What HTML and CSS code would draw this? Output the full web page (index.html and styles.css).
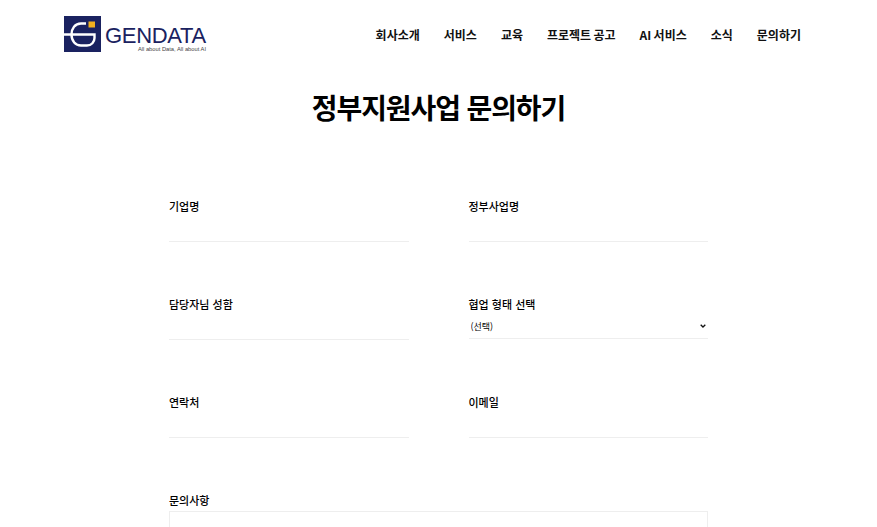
FILE: index.html
```html
<!DOCTYPE html>
<html lang="ko">
<head>
<meta charset="utf-8">
<title>정부지원사업 문의하기</title>
<link rel="stylesheet" href="styles.css">
</head>
<body>
<header class="header">
  <a class="logo" href="#">
    <svg class="logo-mark" width="37" height="36" viewBox="0 0 37 36" aria-hidden="true">
      <rect width="37" height="36" fill="#1a2260"/>
      <rect x="24.500" y="5.500" width="6.500" height="6" fill="#f2b01e"/>
      <path d="M22 7.500H17C11 7.500 7.500 12.500 7.500 18.500C7.500 25 11.500 29.500 17 29.500H23C27.500 29.500 30.500 26 30.500 22V18.500H0" fill="none" stroke="#fff" stroke-width="2.400"/>
    </svg>
    <span class="logo-text">
      <span class="logo-name">GENDATA</span>
      <span class="logo-tag">All about Data, All about AI</span>
    </span>
  </a>
  <nav class="nav">
    <a href="#">회사소개</a>
    <a href="#">서비스</a>
    <a href="#">교육</a>
    <a href="#">프로젝트 공고</a>
    <a href="#">AI 서비스</a>
    <a href="#">소식</a>
    <a href="#">문의하기</a>
  </nav>
</header>
<main class="main">
  <h1 class="title">정부지원사업 문의하기</h1>
  <form class="form">
    <label class="field"><span class="label">기업명</span><input class="input" type="text"></label>
    <label class="field"><span class="label">정부사업명</span><input class="input" type="text"></label>
    <label class="field"><span class="label">담당자님 성함</span><input class="input" type="text"></label>
    <label class="field"><span class="label">협업 형태 선택</span>
      <span class="select-wrap">
        <select class="select"><option>(선택)</option></select>
        <svg class="chevron" width="6" height="4" viewBox="0 0 6 4" aria-hidden="true"><path d="M.7.7 3 3 5.300.7" fill="none" stroke="#111" stroke-width="1.300"/></svg>
      </span>
    </label>
    <label class="field"><span class="label">연락처</span><input class="input" type="text"></label>
    <label class="field"><span class="label">이메일</span><input class="input" type="email"></label>
    <label class="field field-wide"><span class="label">문의사항</span><textarea class="textarea"></textarea></label>
  </form>
</main>
</body>
</html>
```
FILE: styles.css
```css
* { box-sizing: border-box; }
html, body { margin: 0; padding: 0; height: 527px; overflow: hidden; background: #fff; }
body { font-family: "Noto Sans CJK KR", "Noto Sans", sans-serif; color: #111; }
a { color: inherit; text-decoration: none; }

.header { display: flex; justify-content: space-between; align-items: center; height: 68px; padding: 0 76px 0 64px; }
.logo { display: flex; align-items: flex-start; height: 36px; }
.logo-mark { display: block; flex: none; }
.logo-text { display: flex; flex-direction: column; margin-left: 4px; width: 101px; }
.logo-name { font-family: "Liberation Sans", sans-serif; font-size: 22px; line-height: 20px; margin-top: 10px; color: #1a2260; letter-spacing: -0.3px; white-space: nowrap; }
.logo-tag { font-family: "Liberation Sans", sans-serif; font-size: 5.75px; line-height: 6px; color: #444; text-align: right; white-space: nowrap; }

.nav { display: flex; gap: 24px; font-size: 12px; font-weight: 700; line-height: 18px; word-spacing: -1px; margin-top: 2px; }

.main { display: flex; flex-direction: column; align-items: center; }
.title { margin: 18px 0 0; font-size: 28px; font-weight: 700; line-height: 42px; letter-spacing: -1.1px; color: #000; }

.form { display: grid; grid-template-columns: 1fr 1fr; column-gap: 60px; row-gap: 54px; margin-top: 70px; width: 539px; }
.field { display: flex; flex-direction: column; height: 44px; }
.field-wide { grid-column: 1 / -1; height: auto; }
.label { font-size: 11px; font-weight: 500; line-height: 16px; color: #000; }
.input { width: 100%; height: 28px; border: 0; border-bottom: 1px solid #eee; background: #fff; padding: 0 2px; font: inherit; outline: none; }
.select-wrap { position: relative; display: block; margin-top: 3px; }
.select { display: block; width: 100%; height: 24px; border: 0; border-bottom: 1px solid #eee; background: #fff; padding: 0 2px; font: inherit; font-size: 9px; color: #000; outline: none; appearance: none; -webkit-appearance: none; }
.chevron { position: absolute; right: 2px; top: 9px; pointer-events: none; }
.textarea { display: block; width: 100%; height: 120px; margin-top: 3px; border: 1px solid #eee; background: #fff; resize: none; outline: none; }
```
